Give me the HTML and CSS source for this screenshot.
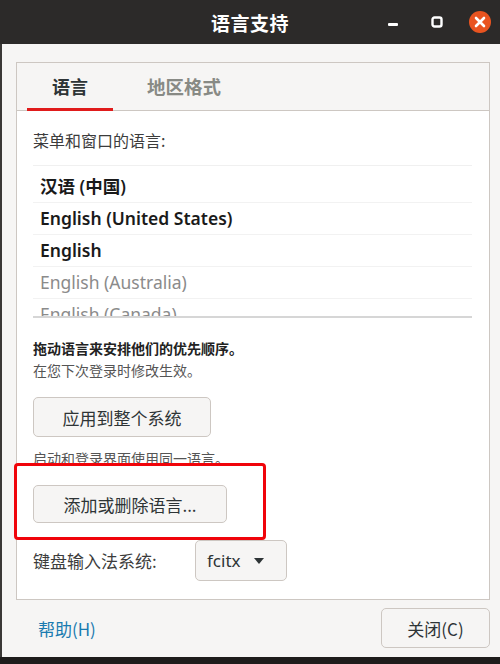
FILE: index.html
```html
<!DOCTYPE html>
<html lang="zh-CN">
<head>
<meta charset="utf-8">
<link rel="stylesheet" href="styles.css">
</head>
<body>
<div class="window">
  <header class="titlebar">
    <div class="title">语言支持</div>
    <div class="controls">
      <span class="ctl min"><svg width="14" height="14" viewBox="0 0 14 14"><rect x="2" y="8" width="10" height="3" rx="1" fill="#fff"/></svg></span>
      <span class="ctl max"><svg width="14" height="14" viewBox="0 0 14 14"><rect x="2.5" y="2.5" width="9" height="9" rx="2" fill="none" stroke="#fff" stroke-width="2.4"/></svg></span>
      <span class="ctl close"><svg width="22" height="22" viewBox="0 0 22 22"><circle cx="11" cy="11" r="11" fill="#e95420"/><path d="M7 7 L15 15 M15 7 L7 15" stroke="#fff" stroke-width="2.6" stroke-linecap="round"/></svg></span>
    </div>
  </header>
  <main class="content">
    <section class="notebook">
      <nav class="tabs">
        <div class="tab active">语言</div>
        <div class="tab">地区格式</div>
      </nav>
      <div class="page">
        <div class="label">菜单和窗口的语言:</div>
        <ul class="langlist">
          <li class="bold">汉语 (中国)</li>
          <li class="bold">English (United States)</li>
          <li class="bold">English</li>
          <li class="dim">English (Australia)</li>
          <li class="dim">English (Canada)</li>
        </ul>
        <div class="hint strong">拖动语言来安排他们的优先顺序。</div>
        <div class="hint">在您下次登录时修改生效。</div>
        <button class="btn apply">应用到整个系统</button>
        <div class="hint note">启动和登录界面使用同一语言。</div>
        <div class="addrow">
          <div class="highlight"></div>
          <button class="btn add">添加或删除语言...</button>
        </div>
        <div class="imrow">
          <span class="imlabel">键盘输入法系统:</span>
          <div class="combo">fcitx <svg class="arrow" width="12" height="8" viewBox="0 0 12 8"><path d="M1 1 L11 1 L6 7 Z" fill="#2e3436"/></svg></div>
        </div>
      </div>
    </section>
    <footer class="actions">
      <a class="help">帮助(H)</a>
      <button class="btn close-btn">关闭(C)</button>
    </footer>
  </main>
</div>
</body>
</html>
```
FILE: styles.css
```css
* { box-sizing: border-box; }
html, body { margin: 0; padding: 0; }
body {
  width: 500px;
  height: 664px;
  overflow: hidden;
  background: #1e1c1b;
  font-family: "Noto Sans", "Noto Sans CJK SC", sans-serif;
  color: #2e3436;
}
.window {
  width: 500px;
  height: 657px;
  display: flex;
  flex-direction: column;
  background: #f6f5f4;
  border-left: 2px solid #3a3836;
}
.titlebar {
  height: 44px;
  background: #2c2a29;
  position: relative;
  display: flex;
  align-items: center;
  justify-content: center;
  margin-left: -2px;
}
.title {
  color: #fff;
  font-family: "Noto Sans CJK SC", sans-serif;
  font-weight: 700;
  font-size: 19px;
  letter-spacing: 0.5px;
}
.controls {
  position: absolute;
  right: 9px;
  top: 11px;
  display: flex;
  align-items: center;
}
.ctl { display: flex; align-items: center; justify-content: center; }
.ctl.min { width: 22px; margin-right: 22px; }
.ctl.max { width: 22px; margin-right: 21px; }
.ctl.close { width: 22px; }
.content {
  flex: 1;
  display: flex;
  flex-direction: column;
  padding: 18px 10px 0 14px;
}
.notebook {
  height: 538px;
  border: 1px solid #cdc7c2;
  display: flex;
  flex-direction: column;
}
.tabs {
  height: 48px;
  display: flex;
  align-items: stretch;
  padding-left: 10px;
  border-bottom: 1px solid #cdc7c2;
  background: #f6f5f4;
}
.tab {
  font-family: "Noto Sans CJK SC", sans-serif;
  font-size: 18px;
  font-weight: 700;
  color: #888a85;
  padding: 10px 24px 0 24px;
  width: 86px;
  text-align: center;
  white-space: nowrap;
}
.tab + .tab { width: auto; padding-left: 34px; font-size: 18.5px; }
.tab.active {
  color: #2e3436;
  border-bottom: 3px solid #e01b1b;
  margin-bottom: -1px;
}
.page {
  flex: 1;
  background: #fff;
  padding: 19px 17px 0 16px;
  display: flex;
  flex-direction: column;
}
.label {
  font-family: "Noto Sans CJK SC", sans-serif;
  font-size: 16px;
  color: #3c3c3c;
  line-height: 20px;
  height: 20px;
}
.langlist {
  list-style: none;
  margin: 15px 0 0 0;
  padding: 5px 0 0 0;
  height: 153px;
  overflow: hidden;
  border-top: 1px solid #f0f0f0;
  border-bottom: 2px solid #d6d6d6;
}
.langlist li {
  height: 32px;
  line-height: 31px;
  padding-left: 7px;
  font-size: 17.5px;
  border-bottom: 1px solid #f2f2f2;
  white-space: nowrap;
}
.langlist li.bold { font-weight: 600; color: #1a1a1a; }
.langlist li.dim { color: #8b8b8b; }
.hint {
  font-family: "Noto Sans CJK SC", sans-serif;
  font-size: 14px;
  line-height: 22px;
  color: #555;
}
.hint.strong { font-weight: 700; color: #222; margin-top: 19px; }
.btn {
  font-family: "Noto Sans CJK SC", sans-serif;
  font-size: 17px;
  color: #2e3436;
  background: #f6f5f4;
  border: 1px solid #cdc7c2;
  border-radius: 5px;
  padding: 0;
  text-align: center;
}
.btn.apply {
  width: 178px;
  height: 40px;
  margin-top: 16px;
}
.hint.note { margin-top: 10px; line-height: 22px; }
.addrow {
  position: relative;
  margin-top: -6px;
  padding-top: 16px;
}
.highlight {
  position: absolute;
  left: -19px;
  top: 0;
  width: 252px;
  height: 77px;
  border: 3px solid #f0040a;
  border-radius: 4px;
  background: #fff;
}
.btn.add {
  position: relative;
  width: 194px;
  height: 38px;
  margin-top: 6px;
}
.imrow {
  display: flex;
  align-items: center;
  margin-top: 17px;
}
.imlabel {
  font-family: "Noto Sans CJK SC", sans-serif;
  font-size: 17px;
  color: #3c3c3c;
  width: 162px;
}
.combo {
  width: 92px;
  height: 41px;
  border: 1px solid #cdc7c2;
  border-radius: 5px;
  background: #f6f5f4;
  display: flex;
  align-items: center;
  padding-left: 11px;
  font-size: 17px;
  color: #2e3436;
  gap: 12px;
}
.actions {
  display: flex;
  justify-content: space-between;
  align-items: center;
  padding: 8px 0 0 22px;
}
.help {
  font-family: "Noto Sans CJK SC", sans-serif;
  font-size: 17px;
  color: #1a7bb0;
}
.btn.close-btn {
  width: 109px;
  height: 40px;
}
```
